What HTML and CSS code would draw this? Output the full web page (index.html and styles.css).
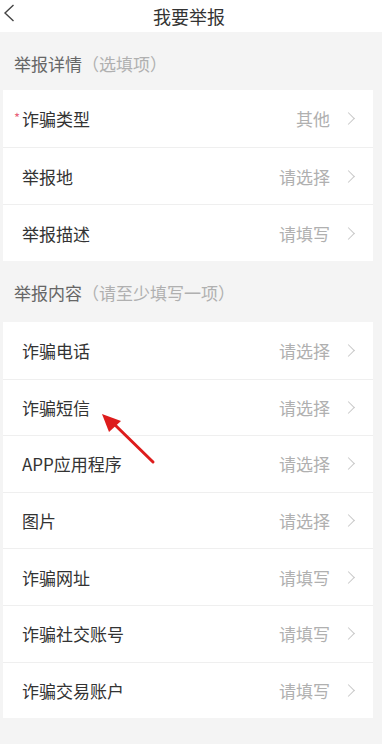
FILE: index.html
```html
<!DOCTYPE html>
<html lang="zh-CN">
<head>
<meta charset="utf-8">
<title>我要举报</title>
<link rel="stylesheet" href="styles.css">
</head>
<body>
<div class="page">
  <header class="topbar">
    <svg class="back" width="14" height="20" viewBox="0 0 14 20"><path d="M11.5 2 L3 10 L11.5 18" fill="none" stroke="#444" stroke-width="1.4"/></svg>
    <div class="title">我要举报</div>
  </header>

  <div class="sec-title sec-first">举报详情<span class="sub">（选填项）</span></div>
  <div class="card">
    <div class="row"><div class="label"><span class="req">*</span>诈骗类型</div><div class="value">其他</div><span class="chev"></span></div>
    <div class="row"><div class="label">举报地</div><div class="value">请选择</div><span class="chev"></span></div>
    <div class="row"><div class="label">举报描述</div><div class="value">请填写</div><span class="chev"></span></div>
  </div>

  <div class="sec-title sec-second">举报内容<span class="sub">（请至少填写一项）</span></div>
  <div class="card card2">
    <div class="row"><div class="label">诈骗电话</div><div class="value">请选择</div><span class="chev"></span></div>
    <div class="row"><div class="label">诈骗短信</div><div class="value">请选择</div><span class="chev"></span></div>
    <div class="row"><div class="label">APP应用程序</div><div class="value">请选择</div><span class="chev"></span></div>
    <div class="row"><div class="label">图片</div><div class="value">请选择</div><span class="chev"></span></div>
    <div class="row"><div class="label">诈骗网址</div><div class="value">请填写</div><span class="chev"></span></div>
    <div class="row"><div class="label">诈骗社交账号</div><div class="value">请填写</div><span class="chev"></span></div>
    <div class="row"><div class="label">诈骗交易账户</div><div class="value">请填写</div><span class="chev"></span></div>
  </div>

  <svg class="arrow" width="70" height="60" viewBox="0 0 70 60">
    <line x1="16" y1="12" x2="55" y2="50" stroke="#dd1c1c" stroke-width="3" stroke-linecap="round"/>
    <polygon points="4,2 23,9 11,20" fill="#dd1c1c"/>
  </svg>
</div>
</body>
</html>
```

FILE: styles.css
```css
html, body {
  margin: 0;
  padding: 0;
}
body {
  background: #f4f4f4;
  font-family: "Noto Sans CJK SC", "Noto Sans", sans-serif;
}
.page {
  position: relative;
  width: 382px;
  height: 744px;
  overflow: hidden;
  background: #f4f4f4;
}
.topbar {
  position: relative;
  height: 32px;
  background: #ffffff;
  display: flex;
  align-items: center;
  justify-content: center;
}
.back {
  position: absolute;
  left: 2px;
  top: 3px;
}
.title {
  font-size: 18px;
  color: #333;
  line-height: 32px;
  margin-left: -4px;
}
.sec-title {
  font-size: 17px;
  color: #666;
  line-height: 22px;
  padding-left: 14px;
}
.sec-first {
  padding-top: 21px;
  padding-bottom: 15px;
}
.sec-second {
  padding-top: 21px;
  padding-bottom: 18px;
}
.sub {
  color: #b0b0b0;
}
.card {
  margin-left: 3px;
  width: 370px;
  background: #ffffff;
}
.row {
  height: 57px;
  box-sizing: border-box;
  display: flex;
  align-items: center;
  padding: 0 17px 0 19px;
}
.card2 .row {
  height: 56.6px;
}
.row + .row {
  border-top: 1px solid #efefef;
}
.label {
  flex: 1;
  font-size: 17px;
  color: #333;
  position: relative;
}
.req {
  position: absolute;
  left: -8px;
  top: 2px;
  font-size: 13px;
  color: #e8627a;
}
.value {
  font-size: 17px;
  color: #b0b0b0;
}
.chev {
  width: 8px;
  height: 8px;
  border-top: 1.2px solid #c8c8c8;
  border-right: 1.2px solid #c8c8c8;
  transform: rotate(45deg);
  margin-left: 14px;
  margin-right: 3px;
}
.arrow {
  position: absolute;
  left: 98px;
  top: 412px;
}
```
